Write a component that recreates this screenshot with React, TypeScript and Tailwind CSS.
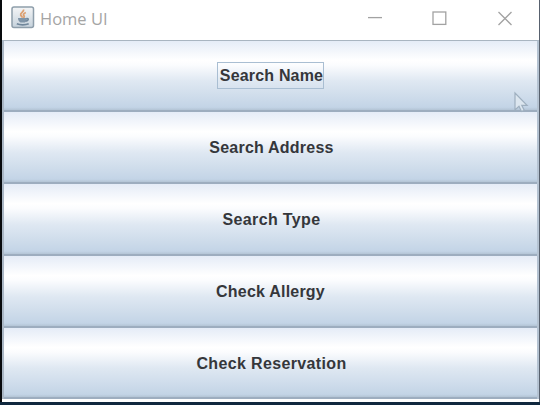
import React from "react";

const buttons = [
  { label: "Search Name", text: "tracking-[0.18px]", size: "h-[71px]" },
  { label: "Search Address", text: "tracking-[0.22px] pt-[2px]", size: "h-[72px]" },
  { label: "Search Type", text: "tracking-[0.35px] pt-[2px]", size: "h-[72px]" },
  { label: "Check Allergy", text: "tracking-[0.22px] pt-[2px] -translate-x-[1px]", size: "h-[72px]" },
  { label: "Check Reservation", text: "tracking-[0.36px] pt-[2px]", size: "h-[71px]" },
];

function JavaIcon() {
  return (
    <svg width="24" height="23" viewBox="0 0 24 23" fill="none">
      <defs>
        <linearGradient id="tile" x1="0" y1="0" x2="0" y2="1">
          <stop offset="0" stopColor="#f4f5f6" />
          <stop offset="1" stopColor="#c6d2dc" />
        </linearGradient>
      </defs>
      <rect x="1" y="1" width="21.5" height="20.5" rx="2" fill="url(#tile)" stroke="#8e9eab" strokeWidth="1.5" />
      <path d="M12.5 3.5c1 2.2-3.5 3.4-2.8 5.4.3 1 1.4 1.6 1.6 2.7M14.8 6.5c-3.2 1.4-2.4 2.6-1.7 3.6.5.8 0 1.4-.7 2" stroke="#dda071" strokeWidth="1.8" />
      <path d="M7 12h9c0 2-.8 3.8-2.2 4.4H9.5C8 15.8 7 14 7 12Z" fill="#8095a8" />
      <path d="M15.5 12.5c2.6-.5 2.2 2.4-.8 2.6M5.8 17.8c3 1.4 8.8 1.4 11.9 0" stroke="#71879b" strokeWidth="1.6" />
    </svg>
  );
}

export default function App() {
  return (
    <div className="relative h-[405px] w-[540px] overflow-hidden bg-[#10283e]">
      <div className="flex h-[402px] w-[540px] flex-col border-l-2 border-r border-l-[#080a0d] border-r-[#58616e] bg-white">
        <header className="flex h-10 shrink-0 items-start bg-white">
          <div className="ml-[9px] mt-[6px]">
            <JavaIcon />
          </div>
          <h1 className="ml-[5px] mt-[7px] font-['Open_Sans',sans-serif] text-[16.5px] leading-6 text-[#a5a5a5]">Home UI</h1>
          <svg className="ml-auto mr-[25px] mt-[10px]" width="147" height="17" viewBox="0 0 147 17" fill="none" stroke="#a2a2a2" strokeWidth="1.3">
            <path d="M1 7.6h14" />
            <rect x="66" y="2" width="12.8" height="12.4" />
            <path d="m131.5 2 13 13M144.5 2l-13 13" />
          </svg>
        </header>
        <main className="flex flex-col border-l-2 border-r-2 border-t border-l-[#aab7c5] border-r-[#b5c3d2] border-t-[#a9b5c1]">
          {buttons.map(({ label, text, size }, index) => (
            <button
              key={label}
              className={`flex shrink-0 items-center justify-center border-b-2 border-[#9dadbf] bg-[linear-gradient(180deg,#e5ecf7_0%,#ffffff_28%,#fbfcfe_35%,#dfe8f2_58%,#c3d4e6_96%,#b3c4d5_100%)] ${size}`}
            >
              <span
                className={`flex h-[27px] items-center whitespace-nowrap border pl-[2px] font-['Liberation_Sans',sans-serif] text-[16px] font-bold text-[#35373b] ${text} ${index === 0 ? "border-[#a9bed2]" : "border-transparent"}`}
              >
                {label}
              </span>
            </button>
          ))}
        </main>
      </div>
      <svg className="absolute left-[513px] top-[91px]" width="16" height="23" viewBox="0 0 16 23">
        <path d="M2 2v17l4-3.7 2.5 5.2 2.7-1.2-2.4-5h5.3Z" fill="#dce6ef" stroke="#9eafbf" strokeWidth="1.2" />
      </svg>
    </div>
  );
}
